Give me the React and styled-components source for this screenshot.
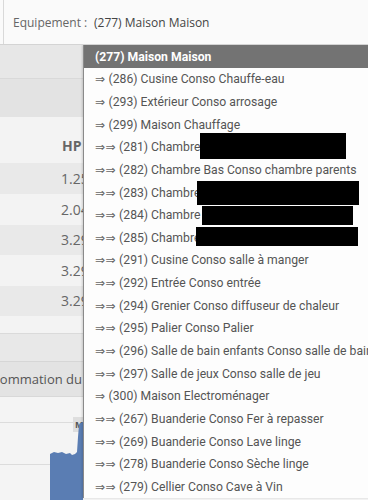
import React from 'react';
import styled, { createGlobalStyle } from 'styled-components';

const GlobalStyle = createGlobalStyle`
  html, body {
    margin: 0;
    padding: 0;
    background: #f5f5f5;
    overflow: hidden;
  }
  #root {
    width: 368px;
    height: 500px;
    overflow: hidden;
  }
`;

const items = [
  { depth: 1, label: '(286) Cusine Conso Chauffe-eau' },
  { depth: 1, label: '(293) Extérieur Conso arrosage' },
  { depth: 1, label: '(299) Maison Chauffage' },
  { depth: 2, label: '(281) Chambre', mask: { w: 146, h: 26, dy: -1 } },
  { depth: 2, label: '(282) Chambre Bas Conso chambre parents' },
  { depth: 2, label: '(283) Chambre', mask: { w: 162, h: 24, dy: 0, dx: -3 } },
  { depth: 2, label: '(284) Chambre', mask: { w: 151, h: 19, dy: 0, dx: 2 } },
  { depth: 2, label: '(285) Chambre', mask: { w: 162, h: 19, dy: -1, dx: -4 } },
  { depth: 2, label: '(291) Cusine Conso salle à manger' },
  { depth: 2, label: '(292) Entrée Conso entrée' },
  { depth: 2, label: '(294) Grenier Conso diffuseur de chaleur' },
  { depth: 2, label: '(295) Palier Conso Palier' },
  { depth: 2, label: '(296) Salle de bain enfants Conso salle de bain enfants' },
  { depth: 2, label: '(297) Salle de jeux Conso salle de jeu' },
  { depth: 1, label: '(300) Maison Electroménager' },
  { depth: 2, label: '(267) Buanderie Conso Fer à repasser' },
  { depth: 2, label: '(269) Buanderie Conso Lave linge' },
  { depth: 2, label: '(278) Buanderie Conso Sèche linge' },
  { depth: 2, label: '(279) Cellier Conso Cave à Vin' },
];

const rows = ['1.25', '2.04', '3.29', '3.29', '3.29'];

const Page = styled.div`
  width: 368px;
  height: 500px;
  display: flex;
  flex-direction: column;
`;

const TopBar = styled.div`
  height: 44px;
  flex: none;
  background: #fafafa;
  border-bottom: 1px solid #d4d4d4;
  display: flex;
  align-items: center;
  padding-left: 3px;
`;

const FieldGroup = styled.div`
  height: 100%;
  display: flex;
  align-items: center;
  border-left: 1px solid #d9d9d9;
  padding-left: 9px;
  font-family: "Open Sans", sans-serif;
  font-size: 12px;
`;

const FieldLabel = styled.span`
  color: #666;
  width: 81px;
`;

const FieldValue = styled.span`
  color: #444;
`;

const Body = styled.div`
  position: relative;
  flex: 1;
  overflow: hidden;
`;

const Backdrop = styled.div`
  display: flex;
  flex-direction: column;
  font-family: "Open Sans", sans-serif;
`;

const Band = styled.div`
  height: ${p => p.h}px;
  background: ${p => p.bg};
  border-bottom: 1px solid ${p => p.line || 'transparent'};
  box-sizing: border-box;
  display: flex;
  align-items: center;
  justify-content: flex-end;
  padding-right: ${p => p.pr || 0}px;
  color: #555;
  font-size: 13px;
  white-space: nowrap;
  overflow: hidden;
`;

const TableHead = styled.div`
  height: 46px;
  background: #f3f3f3;
  display: flex;
  align-items: flex-end;
  padding: 0 0 8px 62px;
  box-sizing: border-box;
  font-size: 14px;
  font-weight: 700;
  color: #666;
  white-space: nowrap;
`;

const TableRow = styled.div`
  height: ${p => p.h}px;
  background: ${p => (p.odd ? '#f3f3f3' : '#e9e9e9')};
  display: flex;
  align-items: center;
  padding-left: 61px;
  font-size: 14px;
  color: #666;
  white-space: nowrap;
`;

const Chart = styled.div`
  position: relative;
  height: 103px;
  background: #f4f4f4;
  display: flex;
  flex-direction: column;
`;

const GridLine = styled.div`
  height: ${p => p.h}px;
  border-bottom: 1px solid #dcdcdc;
  box-sizing: border-box;
`;

const Tag = styled.span`
  position: absolute;
  left: 73px;
  top: 20px;
  width: 12px;
  height: 15px;
  background: #dedede;
  font-size: 9px;
  font-weight: 700;
  color: #555;
  padding-left: 2px;
  line-height: 15px;
`;

const Area = styled.svg`
  position: absolute;
  left: 0;
  top: 0;
`;

const Dropdown = styled.div`
  position: absolute;
  left: 83px;
  top: 0;
  width: 320px;
  background: #fdfdfd;
  border-left: 1px solid #8a8a8a;
  box-shadow: -1px 0 2px rgba(0, 0, 0, 0.15);
  font-family: Roboto, "Noto Sans", sans-serif;
  font-size: 12.2px;
`;

const Selected = styled.div`
  height: 23px;
  background: #737373;
  color: #fff;
  font-weight: 700;
  display: flex;
  align-items: center;
  padding-left: 11px;
`;

const Option = styled.div`
  height: 22.65px;
  display: flex;
  align-items: center;
  padding-left: 11px;
  color: #555;
  white-space: nowrap;
`;

const Arrow = styled.span`
  color: #666;
  font-family: "DejaVu Sans", sans-serif;
  font-size: 12px;
  margin-right: 3px;
  letter-spacing: 0.5px;
`;

const Mask = styled.span`
  display: inline-block;
  background: #000;
  width: ${p => p.w}px;
  height: ${p => p.h}px;
  margin-left: ${p => p.dx || 0}px;
  position: relative;
  top: ${p => p.dy}px;
`;

export default function App() {
  return (
    <Page>
      <GlobalStyle />
      <TopBar>
        <FieldGroup>
          <FieldLabel>Equipement :</FieldLabel>
          <FieldValue>(277) Maison Maison</FieldValue>
        </FieldGroup>
      </TopBar>
      <Body>
        <Backdrop>
          <Band h={34} bg="#e7e7e7" line="#d9d9d9" />
          <Band h={38} bg="#e3e3e3" />
          <TableHead>HP T</TableHead>
          {rows.map((v, i) => (
            <TableRow key={i} odd={i % 2 === 1} h={i === 0 ? 31 : 30.5}>
              {v}
            </TableRow>
          ))}
          <Band h={18} bg="#f3f3f3" line="#dadada" />
          <Band h={28} bg="#e8e8e8" line="#d6d6d6" />
          <Band h={35} bg="#e3e3e3" line="#d8d8d8" pr={286}>
            ommation du
          </Band>
          <Chart>
            <GridLine h={26} />
            <GridLine h={42} />
            <Tag>M</Tag>
            <Area width="83" height="103" viewBox="0 0 83 103">
              <path
                d="M50 57 L54 55 L58 56 L62 55 L66 57 L70 56 L72 58 L75 57 L77 55 L78 40 L79 28 L80 26 L83 25 L83 103 L50 103 Z"
                fill="#5a7db3"
              />
            </Area>
          </Chart>
        </Backdrop>
        <Dropdown>
          <Selected>(277) Maison Maison</Selected>
          {items.map(it => (
            <Option key={it.label}>
              <Arrow>{it.depth === 2 ? '⇒⇒' : '⇒'}</Arrow>
              {it.label}
              {it.mask ? <Mask {...it.mask} /> : null}
            </Option>
          ))}
        </Dropdown>
      </Body>
    </Page>
  );
}
